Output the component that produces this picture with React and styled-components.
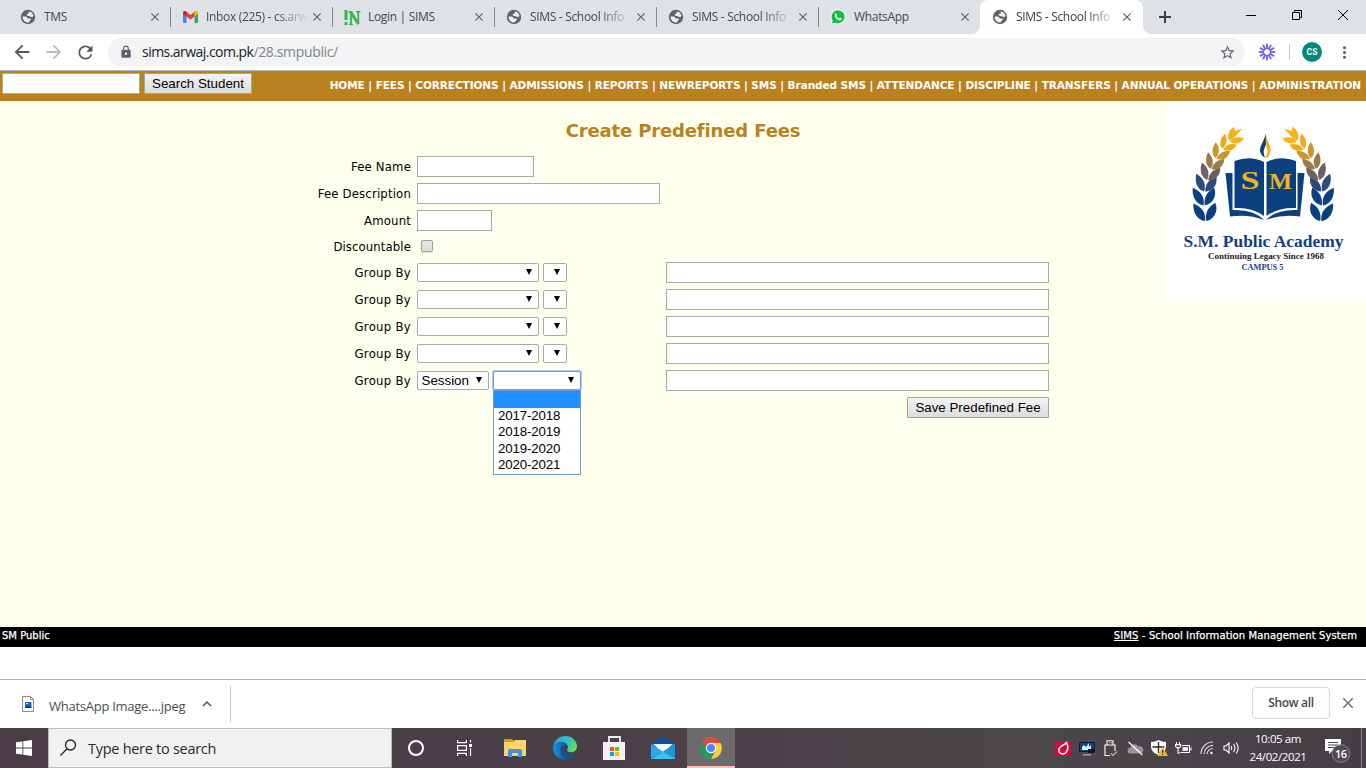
import React from "react";
import styled, { createGlobalStyle } from "styled-components";
import {
  MdArrowBack, MdArrowForward, MdRefresh, MdLock, MdStarBorder,
  MdMoreVert, MdClose, MdKeyboardArrowUp,
} from "react-icons/md";

const ui = `"Open Sans", "Noto Sans", sans-serif`;
const web = `"DejaVu Sans", sans-serif`;
const webNarrow = `"DejaVu Sans Condensed", "DejaVu Sans", sans-serif`;
const arial = `"Liberation Sans", Arial, sans-serif`;

const Global = createGlobalStyle`
  *, *::before, *::after { box-sizing: border-box; }
  body { margin: 0; background: #fff; overflow: hidden; }
  svg { display: block; flex: none; }
`;

const Screen = styled.div`
  width: 1366px; height: 768px; display: flex; flex-direction: column; overflow: hidden;
  font-family: ${ui}; white-space: nowrap;
`;

/* browser tab strip */
const TabStrip = styled.div`
  height: 34px; flex: none; display: flex; background: #dee1e6; padding-left: 8px;
`;
const Tab = styled.div`
  position: relative; width: 162px; height: 34px; display: flex; align-items: center;
  padding: 0 8px 0 12px; font-size: 12px; color: #45494d;
  ${(p) => p.$divider && `&::after { content: ""; position: absolute; right: -1px; top: 7px; width: 1px; height: 20px; background: #85888c; }`}
  ${(p) => p.$active && `
    background: #fff; border-radius: 8px 8px 0 0; width: 163px; padding-right: 9px; color: #3c4043;
    &::before, &::after { content: ""; position: absolute; bottom: 0; width: 8px; height: 8px; }
    &::before { left: -8px; background: radial-gradient(circle at 0 0, transparent 7.5px, #fff 8px); }
    &::after { right: -8px; background: radial-gradient(circle at 100% 0, transparent 7.5px, #fff 8px); }
  `}
`;
const Favicon = styled.div`
  width: 16px; height: 16px; margin-right: 8px; display: flex; align-items: center; justify-content: center;
  color: #5f6368; flex: none;
`;
const TabTitle = styled.div`
  width: 102px; line-height: 18px; letter-spacing: -0.32px;
  ${(p) => p.$fade && `mask-image: linear-gradient(90deg, #000 70px, transparent 102px);`}
`;
const CloseMark = styled.div`
  width: 14px; height: 14px; margin-left: auto; color: #5f6368; display: flex; align-items: center; justify-content: center;
`;
const NewTab = styled.div`
  width: 44px; display: flex; align-items: center; justify-content: center;
`;
const WindowButtons = styled.div`
  margin-left: auto; display: flex; height: 29px; color: #000;
`;
const WindowButton = styled.div`
  width: 46px; display: flex; align-items: center; justify-content: center;
`;

/* browser toolbar */
const Toolbar = styled.div`
  height: 37px; flex: none; display: flex; align-items: center; background: #fff; border-bottom: 1px solid #b0b2b5;
  padding: 0 0 0 11px; color: #5f6368;
`;
const NavIcon = styled.div`
  width: 20px; flex: none; margin-right: 12px; color: ${(p) => (p.$off ? "#bababa" : "#54585c")};
`;
const AddressBar = styled.div`
  width: 1137px; flex: none; height: 28px; border-radius: 14px; background: #f1f3f4; display: flex; align-items: center;
  padding: 0 9px 0 11px; margin-left: 1px;
`;
const Url = styled.div`
  margin-left: 9px; font-size: 14px; line-height: 20px; color: #202124; letter-spacing: -0.54px;
  span { color: #80868b; letter-spacing: -0.35px; }
`;
const Star = styled.div` margin-left: auto; `;
const Extension = styled.div` margin-left: 13px; `;
const ToolDivider = styled.div` width: 1px; height: 16px; margin-left: 13px; background: #c8cacd; `;
const Avatar = styled.div`
  width: 20px; height: 20px; flex: none; border-radius: 50%; background: #00897b; color: #fff; margin-left: 12px;
  font: 700 8.5px/20px Roboto, sans-serif; text-align: center;
`;
const Menu = styled.div` margin-left: 13px; `;

/* school site */
const SiteBar = styled.div`
  height: 30px; flex: none; display: flex; background: #b98221; padding: 2px 5px 0 2px;
`;
const SearchBox = styled.input`
  width: 138px; height: 21px; border: 1px solid #a9a9a9; padding: 0; background: #fff; margin: 0 4px 0 0; outline: 0;
`;
const PushButton = styled.button`
  width: ${(p) => p.$w}px; height: 21px; padding: 0; border: 1px solid #a3a3a3; border-radius: ${(p) => p.$r || 0}px;
  background: linear-gradient(#f4f4f4, #dcdcdc); color: #000; font: 13.33px/18px ${arial}; text-align: center;
`;
const SiteNav = styled.nav`
  margin-left: auto; padding-top: 4px; font: bold 10.5px/16px ${web}; color: #fff; letter-spacing: -0.073px;
`;
const Main = styled.main`
  height: 526px; flex: none; background: #ffffee; display: grid; grid-template-columns: 200px 1fr 200px;
`;
const Center = styled.section` grid-column: 2; display: flex; flex-direction: column; padding-top: 18px; `;
const Heading = styled.h1`
  margin: 0; font: bold 18px/24px ${web}; color: #b98221; text-align: center; letter-spacing: -0.14px;
`;
const Form = styled.div`
  margin: 13px 0 0 111px; display: grid; grid-template-columns: 100px 243px 383px; gap: 6px; width: 738px;
`;
const Label = styled.label`
  height: ${(p) => p.$h || 21}px; font: 13px/${(p) => p.$h || 21}px ${webNarrow}; text-align: right; color: #000;
  letter-spacing: ${(p) => p.$ls || 0.17}px;
`;
const TextInput = styled.input`
  width: ${(p) => p.$w}px; height: 21px; border: 1px solid #a9a9a9; background: #fff; padding: 0; margin: 0; outline: 0;
  grid-column: ${(p) => p.$col || 2};
`;
const Check = styled.div`
  width: 12px; height: 12px; margin: 3px 0 0 4px; border: 1px solid #a0a0a0; border-radius: 2px;
  background: linear-gradient(#e6e6e6, #dcdcdc); box-shadow: 0 1px 1px rgba(0,0,0,.12);
`;
const Selects = styled.div` display: flex; gap: 4px; padding-top: 1px; `;
const SelectBox = styled.div`
  position: relative; width: ${(p) => p.$w}px; height: 19px; background: #fff; border: 1px solid #a9a9a9; border-radius: 2px;
  display: flex; align-items: center; padding: 0 6px 0 3.5px;
  font: 13.33px/17px ${arial}; color: #000;
  ${(p) => p.$open && `border-color: #6f9be0; box-shadow: 0 0 0 1px #a9c6f5;`}
`;
const Caret = styled.i`
  width: 0; height: 0; border: 3.5px solid transparent; border-top: 6px solid #000; border-bottom: 0; margin: -1px 0 0 auto;
`;
const Options = styled.div`
  position: absolute; left: -1px; top: 18px; width: 88px; height: 85px; border: 1px solid #7298d5; background: #fff; z-index: 2;
  letter-spacing: -0.17px;
`;
const Option = styled.div`
  height: ${(p) => (p.$on ? 17 : 16.4)}px; line-height: 16.4px; padding-left: 4px;
  background: ${(p) => (p.$on ? "#1e90ff" : "transparent")};
`;
const SaveCell = styled.div` grid-column: 3; display: flex; justify-content: flex-end; `;
const LogoCard = styled.aside` width: 200px; height: 200px; background: #fff; grid-column: 3; `;
const Footer = styled.footer`
  height: 20px; flex: none; background: #000; color: #fff; display: flex; justify-content: space-between;
  padding: 0 9px 0 2px; font: 10px/17px ${web}; -webkit-text-stroke: 0.25px #fff;
`;
const FootText = styled.div` letter-spacing: ${(p) => p.$ls || 0}px; u { text-underline-offset: 1px; } `;

/* downloads shelf */
const Shelf = styled.div`
  margin-top: 32px; height: 49px; flex: none; border-top: 1px solid #b4b4b4; background: #fff; display: flex; align-items: center;
  padding: 0 9px 0 22px;
`;
const Download = styled.div`
  width: 209px; height: 36px; border-right: 1px solid #c6c6c6; display: flex; align-items: center; color: #4a4e52;
`;
const FileName = styled.div` margin: 3px 0 0 15px; width: 149px; font-size: 13px; line-height: 18px; letter-spacing: -0.26px; `;
const ShowAll = styled.button`
  margin: -2px 0 0 auto; width: 78px; height: 32px; border: 1px solid #d6d8db; border-radius: 4px; background: #fff; padding: 0;
  color: #45494d; font: 600 12px/30px ${ui}; letter-spacing: -0.33px;
`;
const ShelfClose = styled.div` margin: -2px 0 0 9px; color: #6d7175; `;

/* taskbar */
const Taskbar = styled.div`
  height: 40px; flex: none; display: flex; background: linear-gradient(90deg, #4b3c45, #4a4047 50%, #4b474a 75%, #453f45); color: #fff;
`;
const TaskButton = styled.div`
  width: ${(p) => p.$w || 49}px; height: 40px; display: flex; align-items: center; justify-content: center;
  ${(p) => p.$active && "background: #6d696c; border-bottom: 2px solid #ffc0a8; padding-top: 2px;"}
`;
const SearchField = styled.div`
  width: 344px; height: 40px; background: #f1f1f1; border: 1px solid #bcbcbc; display: flex; align-items: center;
  padding-left: 10px; color: #2b2b2b; font-size: 14.5px;
`;
const SearchHint = styled.div` margin: 1px 0 0 11px; line-height: 20px; letter-spacing: -0.28px; `;
const Tray = styled.div` margin-left: auto; display: flex; align-items: center; `;
const TrayIcon = styled.div` width: 24px; display: flex; justify-content: center; `;
const Clock = styled.div`
  width: 70px; height: 40px; padding-top: 2px; text-align: center; font-size: 11.5px; line-height: 18px; letter-spacing: -0.4px;
`;
const Notices = styled.div` width: 48px; padding: 5px 0 0 12px; `;
const DesktopEdge = styled.div` width: 5px; height: 40px; border-left: 1px solid #8a8589; `;

const Globe = () => (
  <svg width="16" height="16" viewBox="-8 -8 16 16">
    <circle r="7.200" fill="#5f6368" />
    <path d="M-5.600-.6L-2.600-.6Q-.6-.4-.4 1.400L2.600 1.600Q3.400 2.600 2 3.600L.6 5.500Q-5 5.400-5.600-.6z" fill="#eef0f3" />
    <path d="M.6-5.500Q4.600-5 5.500-1.200L4.200.2 1.600-.8-.8-1.200-1.400-3 .8-3.600z" fill="#eef0f3" />
  </svg>
);
const Gmail = () => (
  <svg width="15" height="12" viewBox="0 0 15 12">
    <path d="M0 2v9q0 1 1 1h2.500V5L0 2z" fill="#4285f4" />
    <path d="M15 2v9q0 1-1 1h-2.500V5L15 2z" fill="#34a853" />
    <path d="M0 1.500Q1.200-.8 3.500.7l4 3.200 4-3.200Q13.800-.8 15 1.500v1.300L7.500 8.700 0 2.800z" fill="#ea4335" />
    <path d="M11.500.7Q13.800-.8 15 1.500v1.300l-3.500 2.700z" fill="#fbbc04" />
    <path d="M0 1.500Q1.200-.8 3.500.7v4.800L0 2.800z" fill="#c5221f" />
  </svg>
);
const NLogo = () => (
  <svg width="17" height="17" viewBox="0 0 17 17" fill="none" stroke="#3ab54a">
    <path d="M2 1v10M2 13v3" strokeWidth="3" />
    <path d="M7 3.500v11.500M14.300 2.500v12" strokeWidth="1.800" />
    <path d="M6.500 3l8 12" strokeWidth="3" />
    <path d="M4.500 3h4M12 2.700h4.500M5 15.500h4" strokeWidth="1.300" />
  </svg>
);
const WhatsApp = () => (
  <svg width="16" height="16" viewBox="0 0 16 16">
    <path d="M8.200.3a7.500 7.500 0 1 1-3.500 14.200L.5 15.700l1.200-4A7.500 7.500 0 0 1 8.200.3z" fill="#fff" />
    <path d="M8.200 1.200a6.600 6.600 0 1 1-3.300 12.400l-3.100.9.900-3A6.600 6.600 0 0 1 8.200 1.200z" fill="#0cc143" />
    <path d="M5 4.700q.8-1 1.400 0l.6 1.500-.6.900q.9 1.700 2.700 2.400l.9-.9 1.800.9q.3 1.700-1.700 2-2 .1-4-2Q3.900 7.200 5 4.700z" fill="#fff" />
  </svg>
);
const Burst = () => (
  <svg width="18" height="18" viewBox="-9 -9 18 18" stroke="#6c63f5" strokeWidth="1.900">
    {Array.from({ length: 12 }, (_, i) => <path key={i} d="M0-2.900V-8.200" transform={`rotate(${i * 30})`} />)}
    <circle r="3.700" fill="none" strokeWidth="1.300" />
  </svg>
);

const shades = ["#0b4080", "#0b4080", "#2d4a78", "#6c6260", "#9a7c4c", "#c99730", "#f0ac18", "#f7b11c"];
const stem = [
  [39.500, 120, -2, 1], [38, 104.500, 0, 0.98], [38.500, 90.500, 8, 0.92], [41.500, 79, 15, 0.86],
  [45, 68, 23, 0.8], [50, 57.500, 32, 0.76], [56.500, 48, 42, 0.72], [63.500, 40, 50, 0.7],
];
const Laurel = () => (
  <g>
    {stem.map(([x, y, a, s], i) => (
      <g key={i} transform={`translate(${x} ${y}) rotate(${a}) scale(${s})`} fill={shades[i]}>
        <path d="M-.4 0C-8-1-12.500-9-11.500-18C-4-15 1-9-.4 0z" />
        <path d="M.8 0C-.5-8 3-14 10.500-18C13.500-9 8.500-1.500.8 0z" />
      </g>
    ))}
    <path d="M66 39L76.500 27.500L66 31z" fill="#f7b11c" />
  </g>
);
const SchoolLogo = () => (
  <svg width="200" height="200" viewBox="0 0 200 200">
    <Laurel />
    <g transform="matrix(-1 0 0 1 194.500 0)"><Laurel /></g>
    <path d="M99.500 33C98 41 94 44 94 50Q95 55 99 56.500Q96.500 51 99 46Q101.500 41 99.500 33z" fill="#0b4080" />
    <path d="M99.800 32C100 39 104.500 43 104.700 49Q104.500 56 98.500 57.500Q102.500 53 101 48Q99.300 44 99.800 32z" fill="#f5ae18" />
    <path d="M59.500 72h7v37q21-1 31.500 10-15-6-34-3.500z" fill="#0b4080" />
    <path d="M138.500 72h-7v37q-21-1-31.500 10 15-6 34-3.500z" fill="#0b4080" />
    <path d="M68.500 60Q84 54 98 61v54Q86 106 68.500 107z" fill="#0b4080" />
    <path d="M130 60Q114.500 54 100.500 61v54Q112.500 106 130 107z" fill="#0b4080" />
    <g fontFamily="Liberation Serif" fontWeight="bold">
      <text x="74.500" y="88" fontSize="25" fill="#eeb422" textLength="19" lengthAdjust="spacingAndGlyphs">S</text>
      <text x="103" y="88" fontSize="24" fill="#eeb422" textLength="23" lengthAdjust="spacingAndGlyphs">M</text>
      <text x="17.500" y="146" fontSize="17.500" fill="#123f7e" textLength="160" lengthAdjust="spacingAndGlyphs">S.M. Public Academy</text>
      <text x="42" y="158" fontSize="9" fill="#222" textLength="116" lengthAdjust="spacingAndGlyphs">Continuing Legacy Since 1968</text>
      <text x="75.500" y="169" fontSize="8" fill="#123f7e" textLength="42" lengthAdjust="spacingAndGlyphs">CAMPUS 5</text>
    </g>
  </svg>
);

const ImageFile = () => (
  <svg width="12" height="16" viewBox="0 0 12 16">
    <path d="M.5.5h8l3 3v12H.5z" fill="#fff" stroke="#8b8b8b" />
    <path d="M8.500.5v3h3" fill="none" stroke="#8b8b8b" />
    <path d="M3 6h6.500v6H3z" fill="#1271c4" /><path d="M3 12l2.500-3 1.500 1.500 1-1L9.500 12z" fill="#0a3c78" /><circle cx="5" cy="7.500" r=".8" fill="#fff" />
  </svg>
);
const WinLogo = () => (
  <svg width="16" height="16" viewBox="0 0 16 16" fill="#fff">
    <path d="M0 2.300L6.500 1.400v6.200H0zM7.300 1.300L16 0v7.600H7.300zM0 8.400h6.500v6.200L0 13.700zM7.300 8.400H16V16l-8.700-1.300z" />
  </svg>
);
const Magnifier = () => (
  <svg width="18" height="18" viewBox="0 0 18 18" fill="none" stroke="#222" strokeWidth="1.300">
    <circle cx="11.500" cy="6" r="5" /><path d="M8 9.700L1.500 16.500" />
  </svg>
);
const CortanaIcon = () => (
  <svg width="18" height="18" viewBox="0 0 18 18" fill="none" stroke="#fff" strokeWidth="2"><circle cx="9" cy="9" r="7" /></svg>
);
const TaskViewIcon = () => (
  <svg width="18" height="16" viewBox="0 0 18 16" fill="none" stroke="#fff" strokeWidth="1.200">
    <path d="M1.600 0v2.600h8.800V0M1.600 16v-2.600h8.800V16M1.600 5.600h8.800v4.800H1.600zM14.500 0v2.500M14.500 8v8" /><path d="M13 4h3v3h-3z" fill="#fff" stroke="none" />
  </svg>
);
const FolderIcon = () => (
  <svg width="22" height="18" viewBox="0 0 22 18">
    <path d="M0 0h8l2 2v3H0z" fill="#e29a06" /><path d="M0 3h9l2-2h11v16H0z" fill="#fbd56b" />
    <path d="M4 18v-6q0-2 2-2h10q2 0 2 2v6h-4v-4H8v4z" fill="#3b96dd" />
  </svg>
);
const EdgeIcon = () => (
  <svg width="24" height="24" viewBox="0 0 24 24">
    <defs>
      <linearGradient id="edgeTop" x1="0" x2="1" y1=".3" y2=".5"><stop offset="0" stopColor="#2aa9e0" /><stop offset=".6" stopColor="#2cc4c9" /><stop offset="1" stopColor="#66e04d" /></linearGradient>
      <linearGradient id="edgeLow" x1="0" x2="1"><stop offset="0" stopColor="#1793dd" /><stop offset="1" stopColor="#0b4f9c" /></linearGradient>
    </defs>
    <path d="M.3 10.500C1.500 4 6.500 0 12.300 0 19 0 24 5 24 10.500c0 3.500-2.800 5.800-6 5.800-2.500 0-4-1-4-2 0-.8 1-1 1-3C15 8.500 12 6 8.500 6 4.500 6 1.300 8 .3 10.500z" fill="url(#edgeTop)" />
    <path d="M0 12C0 8 4 5.700 8 5.700c3.500 0 6.200 2 6.700 4.300-1-.8-6-1-7 3-1 4.500 2.500 9.500 7.300 10.600C7 25 0 19.500 0 12z" fill="url(#edgeLow)" />
    <path d="M9.500 10.500c-3 4 0 11.500 5.500 12.800 3.500-.7 6.200-2.600 7.800-5.300-4 2.200-9 1.500-11.500-1.700-1.500-2-1.600-4-1.800-5.800z" fill="#0c55a5" />
  </svg>
);
const StoreIcon = () => (
  <svg width="24" height="24" viewBox="0 0 24 24">
    <path d="M7 6V1h11v5" fill="none" stroke="#eee" strokeWidth="1.800" /><path d="M1 6h22v18H1z" fill="#f3f3f3" />
    <path d="M8 11h4v4H8z" fill="#f25022" /><path d="M13 11h4v4h-4z" fill="#7fba00" /><path d="M8 16h4v4H8z" fill="#00a4ef" /><path d="M13 16h4v4h-4z" fill="#ffb900" />
  </svg>
);
const MailIcon = () => (
  <svg width="24" height="22" viewBox="0 0 24 22">
    <path d="M0 7L12 0l12 7v3H0z" fill="#0a53a4" /><path d="M2 7h20L12 16z" fill="#f4f4f4" />
    <path d="M0 7l14 9-10 6H0z" fill="#28a8ea" /><path d="M24 7L2 22h22z" fill="#40bff5" /><path d="M24 7v15L12 14.500z" fill="#1c95e0" />
  </svg>
);
const ChromeIcon = () => (
  <svg width="22" height="22" viewBox="-11 -11 22 22">
    <path d="M0 0L-9.500-5.500A11 11 0 0 1 9.500-5.500z" fill="#dd4b3e" />
    <path d="M0-5H9.700A11 11 0 0 1 0 11L4.300 2.500z" fill="#fccd3f" />
    <path d="M-9.500-5.500L-4.300 2.500 0 5 4 3 0 11A11 11 0 0 1-9.500-5.500z" fill="#1e9f58" />
    <circle r="5.200" fill="#fff" /><circle r="4.100" fill="#4c8bf5" />
  </svg>
);

const AcrobatTray = () => (
  <svg width="16" height="15" viewBox="0 0 16 15"><rect width="16" height="15" rx="1" fill="#d6093a" /><path d="M11.500 1.500Q14.500 8 10.500 12 7.500 14 4.500 11.500 2.500 8 6.500 5 10 3.500 11.500 1.500z" fill="none" stroke="#fff" strokeWidth="1.500" /></svg>
);
const MonitorTray = () => (
  <svg width="16" height="15" viewBox="0 0 16 15"><path d="M0 1h16v10H0z" fill="#0b1c34" /><path d="M1 2h14v8H1z" fill="#12457f" /><path d="M3 9V6l2-2 2 2 3-4v4l2-2v5z" fill="#d9eefc" /><path d="M9 8h6v4H9z" fill="#101820" /><path d="M4 13h8v1.500H4z" fill="#9ba4ab" /></svg>
);
const UsbTray = () => (
  <svg width="14" height="17" viewBox="0 0 14 17" fill="none" stroke="#fff" strokeWidth="1.100"><path d="M3 5V.8h6V5M1 16V5h10v6M1 15.500h5M5 2.800h.8M7 2.800h.8" /><path d="M7 13.500l2 2 4-4" stroke="#bbb" /></svg>
);
const CloudTray = () => (
  <svg width="17" height="15" viewBox="0 0 17 15"><path d="M3.500 12.500a3 3 0 0 1 0-6A4 4 0 0 1 11 5.500a3.500 3.500 0 0 1 3 7z" fill="#98949a" /><path d="M1.500 1L15.500 14" stroke="#fff" strokeWidth="1.300" /></svg>
);
const ShieldTray = () => (
  <svg width="17" height="16" viewBox="0 0 17 16"><path d="M7.500 0Q11 2 15 2v5q0 5-7.500 8Q0 12 0 7V2q4 0 7.500-2z" fill="#fff" /><path d="M7.500 2v11M1.500 7h12" stroke="#2a2629" strokeWidth="1.300" /><path d="M11.500 6.500L17 16H6.500z" fill="#fdb813" /><path d="M11.700 10v3M11.700 14v1" stroke="#222" strokeWidth="1.200" /></svg>
);
const BatteryTray = () => (
  <svg width="17" height="13" viewBox="0 0 17 13" fill="none" stroke="#fff" strokeWidth="1.100"><path d="M7 3.500h7.500v7h-9M16 5.500v3M1.500 0v2.500M4.500 0v2.500M3 6v5h2" /><path d="M.6 2.600h5v2Q3 7 .6 4.600z" /><path d="M7.500 5.200h5.500v3.600H7.500z" fill="#fff" stroke="none" /></svg>
);
const WifiTray = () => (
  <svg width="14" height="14" viewBox="0 0 14 14" fill="none" stroke="#d8d6d8" strokeWidth="1.200"><path d="M1 13A12 12 0 0 1 13 1M4 13A9 9 0 0 1 13 4.300M7 13A6 6 0 0 1 13 7.500" /><circle cx="11.500" cy="12" r="1.200" fill="#fff" stroke="none" /></svg>
);
const SoundTray = () => (
  <svg width="17" height="14" viewBox="0 0 17 14" fill="none" stroke="#fff" strokeWidth="1.100"><path d="M1 5v4h2l3 3V2L3 5zM8 5q1.500 2 0 4M10.500 3q3 4 0 8M13 1.500q4.500 5.500 0 11" /></svg>
);
const NoticeIcon = () => (
  <svg width="27" height="25" viewBox="0 0 27 25"><path d="M0 1h16v12H7l-3 3v-3H0z" fill="#fff" /><path d="M3 4.500h10M3 7h10M3 9.500h8" stroke="#4a464a" /><circle cx="16" cy="15.500" r="8.800" fill="#4f4b4e" stroke="#87838a" /><text x="15.700" y="19.500" textAnchor="middle" fontFamily="Open Sans" fontSize="11" fontWeight="600" fill="#fff" letterSpacing="-.5">16</text></svg>
);

const tabs = [
  { t: "TMS", icon: <Globe />, d: 1 },
  { t: "Inbox (225) - cs.arw", icon: <Gmail />, d: 1, fade: 1 },
  { t: "Login | SIMS", icon: <NLogo />, d: 1 },
  { t: "SIMS - School Info", icon: <Globe />, d: 1, fade: 1 },
  { t: "SIMS - School Info", icon: <Globe />, d: 1, fade: 1 },
  { t: "WhatsApp", icon: <WhatsApp /> },
  { t: "SIMS - School Info", icon: <Globe />, active: 1, fade: 1 },
];
const menu = "HOME | FEES | CORRECTIONS | ADMISSIONS | REPORTS | NEWREPORTS | SMS | Branded SMS | ATTENDANCE | DISCIPLINE | TRANSFERS | ANNUAL OPERATIONS | ADMINISTRATION";

export default function App() {
  return (
    <Screen>
      <Global />
      <TabStrip>
        {tabs.map((t, i) => (
          <Tab key={i} $divider={t.d} $active={t.active}>
            <Favicon>{t.icon}</Favicon>
            <TabTitle $fade={t.fade}>{t.t}</TabTitle>
            <CloseMark><MdClose size={14} /></CloseMark>
          </Tab>
        ))}
        <NewTab><svg width="12" height="12"><path d="M6 0v12M0 6h12" stroke="#3c4043" strokeWidth="2" /></svg></NewTab>
        <WindowButtons>
          <WindowButton><svg width="10" height="10"><path d="M0 5.500h10" stroke="#000" /></svg></WindowButton>
          <WindowButton><svg width="10" height="10" fill="none" stroke="#000"><path d="M.5 2.500h7v7h-7zM2.500 2.500v-2h7v7h-2" /></svg></WindowButton>
          <WindowButton><svg width="10" height="10" fill="none" stroke="#000"><path d="M0 0l10 10M10 0L0 10" /></svg></WindowButton>
        </WindowButtons>
      </TabStrip>
      <Toolbar>
        <NavIcon><MdArrowBack size={22} /></NavIcon>
        <NavIcon $off><MdArrowForward size={22} /></NavIcon>
        <NavIcon><MdRefresh size={21} /></NavIcon>
        <AddressBar>
          <MdLock size={14} />
          <Url>sims.arwaj.com.pk<span>/28.smpublic/</span></Url>
          <Star><MdStarBorder size={17} /></Star>
        </AddressBar>
        <Extension><Burst /></Extension>
        <ToolDivider />
        <Avatar>CS</Avatar>
        <Menu><MdMoreVert size={19} /></Menu>
      </Toolbar>
      <SiteBar>
        <SearchBox />
        <PushButton $w={108}>Search Student</PushButton>
        <SiteNav>{menu}</SiteNav>
      </SiteBar>
      <Main>
        <Center>
          <Heading>Create Predefined Fees</Heading>
          <Form>
            <Label>Fee Name</Label><TextInput $w={117} /><span />
            <Label>Fee Description</Label><TextInput $w={243} /><span />
            <Label>Amount</Label><TextInput $w={75} /><span />
            <Label $h={19} $ls={0.1}>Discountable</Label><Check /><span />
            {[0, 1, 2, 3].map((i) => (
              <React.Fragment key={i}>
                <Label $ls={0.28}>Group By</Label>
                <Selects><SelectBox $w={122}><Caret /></SelectBox><SelectBox $w={24}><Caret /></SelectBox></Selects>
                <TextInput $w={383} $col={3} />
              </React.Fragment>
            ))}
            <Label $ls={0.28}>Group By</Label>
            <Selects>
              <SelectBox $w={72}>Session<Caret /></SelectBox>
              <SelectBox $w={88} $open>
                <Caret />
                <Options>
                  <Option $on />
                  {["2017-2018", "2018-2019", "2019-2020", "2020-2021"].map((y) => <Option key={y}>{y}</Option>)}
                </Options>
              </SelectBox>
            </Selects>
            <TextInput $w={383} $col={3} />
            <SaveCell><PushButton $w={142} $r={1}>Save Predefined Fee</PushButton></SaveCell>
          </Form>
        </Center>
        <LogoCard><SchoolLogo /></LogoCard>
      </Main>
      <Footer>
        <FootText>SM Public</FootText>
        <FootText $ls={0.12}><u>SIMS</u> - School Information Management System</FootText>
      </Footer>
      <Shelf>
        <Download><ImageFile /><FileName>WhatsApp Image....jpeg</FileName><MdKeyboardArrowUp size={18} /></Download>
        <ShowAll>Show all</ShowAll>
        <ShelfClose><MdClose size={18} /></ShelfClose>
      </Shelf>
      <Taskbar>
        <TaskButton $w={48}><WinLogo /></TaskButton>
        <SearchField><Magnifier /><SearchHint>Type here to search</SearchHint></SearchField>
        <TaskButton $w={48}><CortanaIcon /></TaskButton>
        <TaskButton $w={49}><TaskViewIcon /></TaskButton>
        <TaskButton $w={51}><FolderIcon /></TaskButton>
        <TaskButton><EdgeIcon /></TaskButton>
        <TaskButton><StoreIcon /></TaskButton>
        <TaskButton><MailIcon /></TaskButton>
        <TaskButton $w={48} $active><ChromeIcon /></TaskButton>
        <Tray>
          <TrayIcon><AcrobatTray /></TrayIcon><TrayIcon><MonitorTray /></TrayIcon><TrayIcon><UsbTray /></TrayIcon>
          <TrayIcon><CloudTray /></TrayIcon><TrayIcon><ShieldTray /></TrayIcon><TrayIcon><BatteryTray /></TrayIcon>
          <TrayIcon><WifiTray /></TrayIcon><TrayIcon><SoundTray /></TrayIcon>
          <Clock><div>10:05 am</div><div>24/02/2021</div></Clock>
          <Notices><NoticeIcon /></Notices>
          <DesktopEdge />
        </Tray>
      </Taskbar>
    </Screen>
  );
}
